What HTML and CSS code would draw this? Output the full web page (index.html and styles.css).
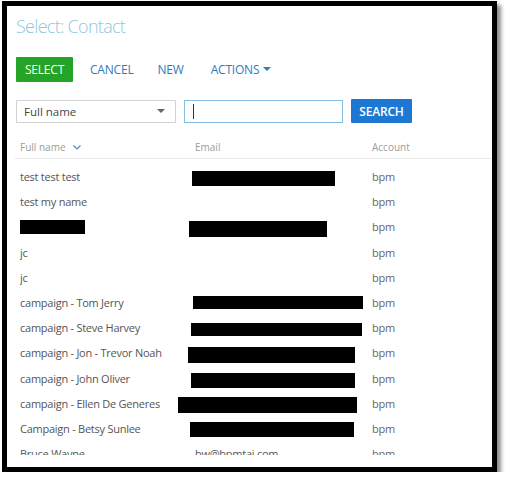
FILE: index.html
```html
<!DOCTYPE html>
<html lang="en">
<head>
<meta charset="utf-8">
<title>Select: Contact</title>
<link rel="stylesheet" href="styles.css">
</head>
<body>
<div class="frame">
  <h1 class="title">Select: Contact</h1>

  <div class="toolbar">
    <button class="btn btn-primary">SELECT</button>
    <button class="btn btn-link">CANCEL</button>
    <button class="btn btn-link">NEW</button>
    <button class="btn btn-link">ACTIONS
      <svg class="caret" width="8" height="4" viewBox="0 0 8 4"><path d="M0 0h8L4 4z" fill="currentColor"/></svg>
    </button>
  </div>

  <div class="search">
    <div class="combo">
      <span>Full name</span>
      <svg width="8" height="4" viewBox="0 0 8 4"><path d="M0 0h8L4 4z" fill="#666"/></svg>
    </div>
    <div class="field"><span class="cursor"></span></div>
    <button class="btn btn-search">SEARCH</button>
  </div>

  <div class="grid-head">
    <div class="col col-name">Full name
      <svg class="sort" width="8" height="5" viewBox="0 0 8 5"><path d="M0.5 0.5L4 4 7.5 0.5" fill="none" stroke="#4a8fd0" stroke-width="1.2"/></svg>
    </div>
    <div class="col col-email">Email</div>
    <div class="col col-account">Account</div>
  </div>

  <div class="list">
    <div class="row"><div class="col col-name">test test test</div><div class="col col-email"></div><div class="col col-account">bpm</div>
      <span class="redact" style="left:172px;top:7px;width:143px;height:15px"></span></div>
    <div class="row"><div class="col col-name">test my name</div><div class="col col-email"></div><div class="col col-account">bpm</div></div>
    <div class="row"><div class="col col-name"></div><div class="col col-email"></div><div class="col col-account">bpm</div>
      <span class="redact" style="left:-7px;top:6px;width:72px;height:14px"></span>
      <span class="redact" style="left:169px;top:7px;width:138px;height:16px"></span></div>
    <div class="row"><div class="col col-name">jc</div><div class="col col-email"></div><div class="col col-account">bpm</div></div>
    <div class="row"><div class="col col-name">jc</div><div class="col col-email"></div><div class="col col-account">bpm</div></div>
    <div class="row"><div class="col col-name">campaign - Tom Jerry</div><div class="col col-email"></div><div class="col col-account">bpm</div>
      <span class="redact" style="left:173px;top:6px;width:170px;height:13px"></span></div>
    <div class="row"><div class="col col-name">campaign - Steve Harvey</div><div class="col col-email"></div><div class="col col-account">bpm</div>
      <span class="redact" style="left:171px;top:8px;width:171px;height:13px"></span></div>
    <div class="row"><div class="col col-name">campaign - Jon - Trevor Noah</div><div class="col col-email"></div><div class="col col-account">bpm</div>
      <span class="redact" style="left:168px;top:7px;width:167px;height:16px"></span></div>
    <div class="row"><div class="col col-name">campaign - John Oliver</div><div class="col col-email"></div><div class="col col-account">bpm</div>
      <span class="redact" style="left:171px;top:7px;width:164px;height:15px"></span></div>
    <div class="row"><div class="col col-name">campaign - Ellen De Generes</div><div class="col col-email"></div><div class="col col-account">bpm</div>
      <span class="redact" style="left:158px;top:6px;width:179px;height:16px"></span></div>
    <div class="row"><div class="col col-name">Campaign - Betsy Sunlee</div><div class="col col-email"></div><div class="col col-account">bpm</div>
      <span class="redact" style="left:170px;top:6px;width:164px;height:15px"></span></div>
    <div class="row"><div class="col col-name">Bruce Wayne</div><div class="col col-email">bw@bpmtai.com</div><div class="col col-account">bpm</div></div>
  </div>
</div>
</body>
</html>
```

FILE: styles.css
```css
* { box-sizing: border-box; }

html, body {
  margin: 0;
  background: #fff;
}

body {
  font-family: "Open Sans", "Segoe UI", Arial, sans-serif;
  color: #555;
}

.frame {
  margin: 1px 0 0 2px;
  width: 495px;
  height: 471px;
  border: 5px solid #000;
  box-shadow: 4px 4px 4px rgba(0, 0, 0, 0.45);
  background: #fff;
  overflow: hidden;
  padding: 0 0 0 9px;
}

.title {
  margin: 0;
  padding-top: 9px;
  height: 51px;
  font-size: 18px;
  font-weight: 300;
  line-height: 22px;
  color: #92c6e0;
  letter-spacing: -0.7px;
}

.toolbar {
  display: flex;
  align-items: center;
  height: 25px;
}

.btn {
  font-family: inherit;
  font-size: 12px;
  border: 0;
  padding: 0;
  background: none;
  cursor: pointer;
  height: 25px;
  display: flex;
  align-items: center;
  letter-spacing: -0.2px;
}

.btn-primary {
  width: 57px;
  justify-content: center;
  background: #25a527;
  color: #fff;
  border-radius: 1px;
}

.btn-link {
  color: #2f7ac0;
}

.toolbar .btn-link:nth-child(2) { margin-left: 17px; }
.toolbar .btn-link:nth-child(3) { margin-left: 24px; }
.toolbar .btn-link:nth-child(4) { margin-left: 27px; }

.caret {
  margin-left: 4px;
  margin-top: -1px;
}

.search {
  display: flex;
  align-items: center;
  margin-top: 17px;
  height: 24px;
}

.combo {
  width: 160px;
  height: 23px;
  border: 1px solid #d4d4d4;
  display: flex;
  align-items: center;
  justify-content: space-between;
  padding: 0 10px 0 7px;
  font-size: 11.5px;
  color: #444;
}

.field {
  width: 159px;
  height: 23px;
  margin-left: 8px;
  border: 1px solid #86bde3;
  padding: 3px 0 0 8px;
}

.cursor {
  display: block;
  width: 1px;
  height: 15px;
  background: #333;
}

.btn-search {
  margin-left: 8px;
  width: 61px;
  height: 24px;
  justify-content: center;
  background: #1d78d3;
  color: #fff;
  font-weight: 600;
  border-radius: 1px;
}

.grid-head {
  display: flex;
  align-items: center;
  margin: 13px 0 0 -1px;
  width: 476px;
  height: 23px;
  border-bottom: 1px solid #e8e8e8;
  font-size: 10px;
  color: #9c9c9c;
}

.grid-head .col-name { width: 180px; padding-left: 5px; }

.sort { margin-left: 5px; vertical-align: 1px; }

.col-name { width: 175px; }
.col-email { width: 177px; }
.col-account { flex: 1; }

.list {
  height: 296px;
  overflow: hidden;
  margin-left: 4px;
  padding-top: 5px;
}

.row {
  position: relative;
  display: flex;
  align-items: center;
  height: 25.2px;
  font-size: 11px;
  letter-spacing: -0.25px;
  color: #555;
}

.row .col-account { color: #666; }

/* black blocks painted over private values */
.redact {
  position: absolute;
  background: #000;
}
```
